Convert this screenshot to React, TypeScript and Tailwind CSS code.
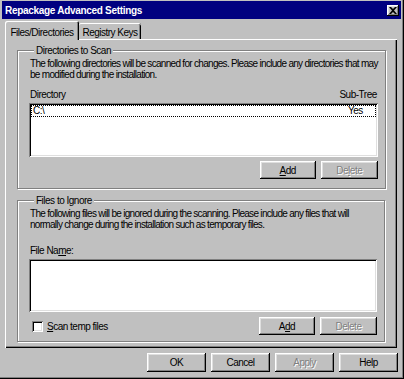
import React from "react"

const raised =
  "shadow-[inset_-1px_-1px_#000,inset_1px_1px_#fff,inset_-2px_-2px_#808080,inset_2px_2px_#dfdfdf]"
const sunken =
  "shadow-[inset_1px_1px_#808080,inset_-1px_-1px_#fff,inset_2px_2px_#000,inset_-2px_-2px_#dfdfdf]"

const Btn: React.FC<{ children: React.ReactNode; disabled?: boolean; w: string; h: string }> = ({
  children,
  disabled,
  w,
  h,
}) => (
  <button
    className={`${w} ${h} bg-[#c0c0c0] ${raised} flex items-center justify-center text-[10px] tracking-[-0.5px] ${
      disabled ? "text-[#808080] [text-shadow:1px_1px_0_#fff]" : "text-black"
    }`}
  >
    {children}
  </button>
)

const Group: React.FC<{ title: string; className: string; children: React.ReactNode }> = ({
  title,
  className,
  children,
}) => (
  <fieldset
    className={`border border-[#808080] shadow-[inset_1px_1px_#fff,1px_1px_#fff] pl-[11px] pr-[7px] ${className}`}
  >
    <legend className="ml-[5px] px-[2px] bg-[#c0c0c0] leading-[13px]">{title}</legend>
    {children}
  </fieldset>
)

export default function App() {
  return (
    <div className="w-[404px] h-[379px] bg-[#c0c0c0] font-['Liberation_Sans',Arial,sans-serif] text-[10px] tracking-[-0.5px] text-black pl-[2px] pr-[3px] shadow-[inset_-1px_-1px_#000,inset_-2px_-2px_#808080] flex flex-col">
      {/* title bar */}
      <div className="h-[18px] bg-[#000080] flex items-center justify-between pl-[3px] pr-[2px] mt-[1px]">
        <span className="text-white font-bold text-[10px] tracking-[-0.3px]">Repackage Advanced Settings</span>
        <div className={`w-[12px] h-[11px] bg-[#c0c0c0] ${raised} flex items-center justify-center`}>
          <svg width="8" height="7" viewBox="0 0 8 7">
            <path d="M0 0h2l2 2 2-2h2L5 3.5 8 7H6L4 5 2 7H0l3-3.5z" fill="#000" />
          </svg>
        </div>
      </div>

      {/* tabs */}
      <div className="flex items-end h-[19px] mt-[1px] pl-[3px] whitespace-nowrap">
        <div className="relative z-10 w-[74px] h-[19px] -mb-[1px] bg-[#c0c0c0] shadow-[inset_1px_1px_#fff,inset_-1px_0_#000,inset_-2px_0_#808080] rounded-t-[2px] flex items-start justify-center pt-[4px]">
          Files/Directories
        </div>
        <div className="w-[62px] h-[16px] bg-[#c0c0c0] shadow-[inset_0_1px_#fff,inset_-1px_0_#000,inset_-2px_0_#808080] rounded-t-[2px] flex items-start justify-center pt-[2px]">
          Registry Keys
        </div>
      </div>

      {/* panel */}
      <div className="ml-[3px] w-[392px] h-[309px] shadow-[inset_1px_1px_#fff,inset_-1px_-1px_#000,inset_-2px_-2px_#808080] pt-[5px] px-[12px]">
        <Group title="Directories to Scan" className="h-[145px]">
          <p className="ml-[1px] mt-[1px] leading-[11px] whitespace-nowrap tracking-[-0.7px]">
            The following directories will be scanned for changes. Please include any directories that may
            <br />
            be modified during the installation.
          </p>
          <div className="flex justify-between leading-[12px] mt-[9px] mx-[1px]">
            <span>Directory</span>
            <span>Sub-Tree</span>
          </div>
          <div className={`mt-[2px] h-[54px] bg-white ${sunken} p-[2px]`}>
            <div className="h-[12px] border border-dotted border-black flex justify-between items-center px-[1px] leading-[10px]">
              <span>C:\</span>
              <span className="mr-[11px]">Yes</span>
            </div>
          </div>
          <div className="flex justify-end gap-[5px] mt-[4px]">
            <Btn w="w-[56px]" h="h-[18px]">
              <span>
                <u>A</u>dd
              </span>
            </Btn>
            <Btn w="w-[57px]" h="h-[18px]" disabled>
              <span>
                De<u>l</u>ete
              </span>
            </Btn>
          </div>
        </Group>

        <Group title="Files to Ignore" className="h-[148px] mt-[5px]">
          <p className="ml-[1px] mt-[1px] leading-[11px] whitespace-nowrap tracking-[-0.7px]">
            The following files will be ignored during the scanning. Please include any files that will
            <br />
            normally change during the installation such as temporary files.
          </p>
          <div className="ml-[1px] mt-[15px] leading-[12px]">
            File Na<u>m</u>e:
          </div>
          <div className={`mt-[2px] h-[53px] bg-white ${sunken}`}></div>
          <div className="flex items-center justify-between mt-[5px]">
            <label className="flex items-center gap-[4px] ml-[3px]">
              <span className={`w-[11px] h-[11px] bg-white ${sunken}`}></span>
              <span>
                <u>S</u>can temp files
              </span>
            </label>
            <div className="flex gap-[5px]">
              <Btn w="w-[56px]" h="h-[18px]">
                <span>
                  A<u>d</u>d
                </span>
              </Btn>
              <Btn w="w-[57px]" h="h-[18px]" disabled>
                <span>Delete</span>
              </Btn>
            </div>
          </div>
        </Group>
      </div>

      {/* dialog buttons */}
      <div className="flex justify-end gap-[5px] mt-[5px] pr-[3px]">
        <Btn w="w-[59px]" h="h-[19px]">OK</Btn>
        <Btn w="w-[59px]" h="h-[19px]">Cancel</Btn>
        <Btn w="w-[59px]" h="h-[19px]" disabled>
          Apply
        </Btn>
        <Btn w="w-[59px]" h="h-[19px]">Help</Btn>
      </div>
    </div>
  )
}
